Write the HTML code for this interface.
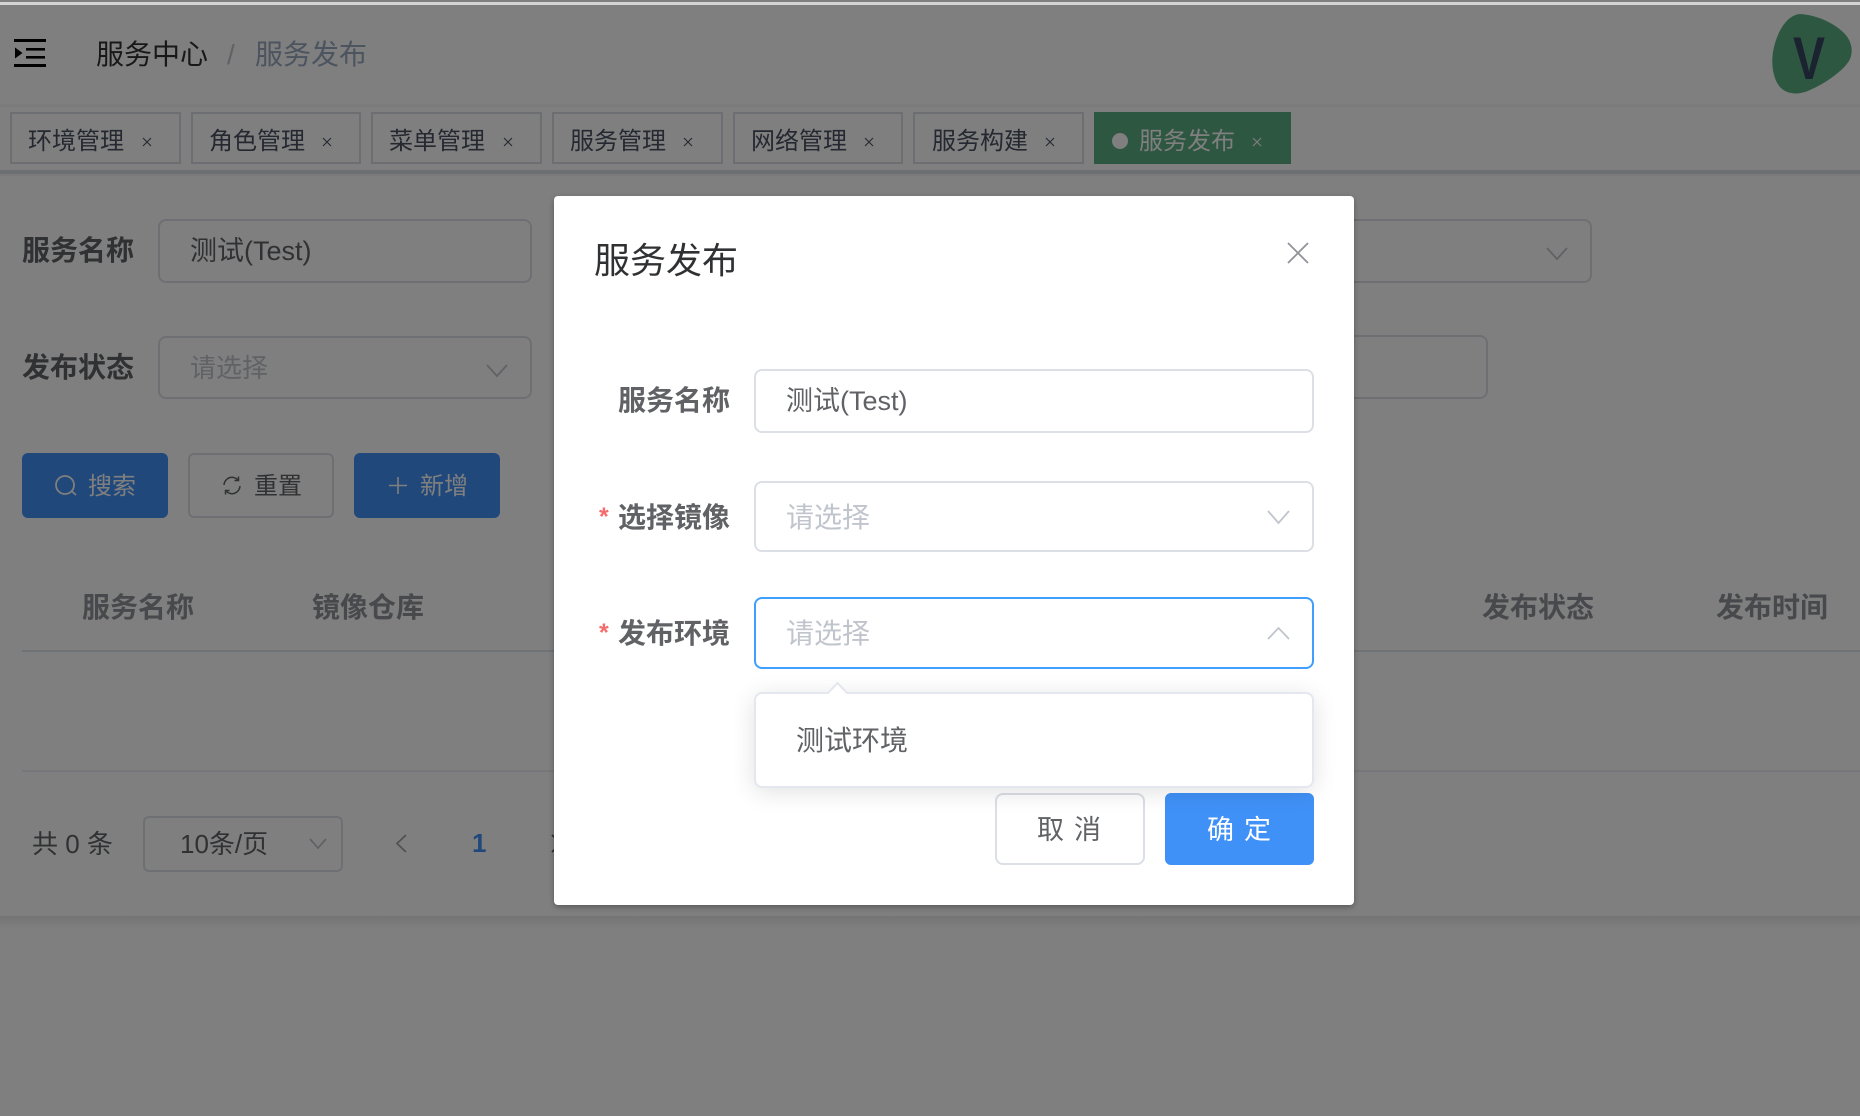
<!DOCTYPE html>
<html lang="zh-CN">
<head>
<meta charset="utf-8">
<title>服务发布</title>
<style>
*{box-sizing:border-box;margin:0;padding:0}
html,body{width:1860px;height:1116px;overflow:hidden;background:#fff;font-family:"Liberation Sans","Noto Sans CJK SC",sans-serif}
body{position:relative}
.t{position:absolute;white-space:nowrap;line-height:1}
.b{font-weight:700}
.box{position:absolute;border:2px solid #dcdfe6;border-radius:8px;background:#fff}
.tab{position:absolute;top:112px;height:52px;border:2px solid #d8dce5;background:#fff}
.btn{position:absolute;top:453px;height:65px;border-radius:6px;background:#4091f7}
svg{position:absolute;left:0;top:0}
</style>
</head>
<body>
<!-- page beneath overlay -->
<div style="position:absolute;left:0;top:104px;width:1860px;height:3px;background:#f6f6f6"></div>
<div style="position:absolute;left:0;top:107px;width:1860px;height:63px;background:#fff"></div>
<div style="position:absolute;left:0;top:170px;width:1860px;height:4px;background:#d8dce5"></div>
<div style="position:absolute;left:0;top:174px;width:1860px;height:2px;background:#f4f4f4"></div>
<div style="position:absolute;left:0;top:916px;width:1860px;height:12px;background:linear-gradient(#e9e9e9,#fefefe)"></div>

<div class="t" style="left:96px;top:41px;font-size:28px;color:#303133">服务中心</div>
<div class="t" style="left:227px;top:41px;font-size:28px;color:#c0c4cc">/</div>
<div class="t" style="left:255px;top:41px;font-size:28px;color:#97a8be">服务发布</div>

<div class="tab" style="left:10px;width:171px"></div>
<div class="t" style="left:28px;top:130px;font-size:24px;color:#495060">环境管理</div>
<div class="tab" style="left:191px;width:170px"></div>
<div class="t" style="left:209px;top:130px;font-size:24px;color:#495060">角色管理</div>
<div class="tab" style="left:371px;width:171px"></div>
<div class="t" style="left:389px;top:130px;font-size:24px;color:#495060">菜单管理</div>
<div class="tab" style="left:552px;width:171px"></div>
<div class="t" style="left:570px;top:130px;font-size:24px;color:#495060">服务管理</div>
<div class="tab" style="left:733px;width:170px"></div>
<div class="t" style="left:751px;top:130px;font-size:24px;color:#495060">网络管理</div>
<div class="tab" style="left:913px;width:171px"></div>
<div class="t" style="left:932px;top:130px;font-size:24px;color:#495060">服务构建</div>
<div style="position:absolute;left:1094px;top:112px;width:197px;height:52px;background:#5cae84"></div>
<div style="position:absolute;left:1112px;top:133px;width:16px;height:16px;border-radius:50%;background:#fff"></div>
<div class="t" style="left:1139px;top:130px;font-size:24px;color:#fff">服务发布</div>

<!-- filter form -->
<div class="t b" style="left:22px;top:237px;font-size:28px;color:#606266">服务名称</div>
<div class="box" style="left:158px;top:219px;width:374px;height:64px"></div>
<div class="t" style="left:190px;top:238px;font-size:27px;color:#606266">测试(Test)</div>
<div class="box" style="left:1300px;top:219px;width:292px;height:64px"></div>
<div class="box" style="left:1300px;top:335px;width:188px;height:64px"></div>
<div class="t b" style="left:22px;top:354px;font-size:28px;color:#606266">发布状态</div>
<div class="box" style="left:158px;top:336px;width:374px;height:63px"></div>
<div class="t" style="left:190px;top:355px;font-size:26px;color:#c0c4cc">请选择</div>

<div class="btn" style="left:22px;width:146px"></div>
<div class="t" style="left:88px;top:475px;font-size:24px;color:#fff">搜索</div>
<div class="box" style="left:188px;top:453px;width:146px;height:65px;border-radius:6px"></div>
<div class="t" style="left:254px;top:475px;font-size:24px;color:#606266">重置</div>
<div class="btn" style="left:354px;width:146px"></div>
<div class="t" style="left:420px;top:475px;font-size:24px;color:#fff">新增</div>

<!-- table -->
<div class="t b" style="left:82px;top:594px;font-size:28px;color:#909399">服务名称</div>
<div class="t b" style="left:312px;top:594px;font-size:28px;color:#909399">镜像仓库</div>
<div class="t b" style="left:1482px;top:594px;font-size:28px;color:#909399">发布状态</div>
<div class="t b" style="left:1716px;top:594px;font-size:28px;color:#909399">发布时间</div>
<div style="position:absolute;left:22px;top:650px;width:1838px;height:2px;background:#dfe6ec"></div>
<div style="position:absolute;left:22px;top:770px;width:1838px;height:2px;background:#ebeef5"></div>

<!-- pagination -->
<div class="t" style="left:32px;top:831px;font-size:26px;color:#606266">共 0 条</div>
<div class="box" style="left:143px;top:816px;width:200px;height:56px;border-radius:6px"></div>
<div class="t" style="left:180px;top:831px;font-size:26px;color:#606266">10条/页</div>
<div class="t b" style="left:472px;top:830px;font-size:26px;color:#4091f7">1</div>

<!-- icons beneath overlay -->
<svg width="1860" height="1116" viewBox="0 0 1860 1116">
  <g fill="#000">
    <rect x="14" y="39" width="32" height="3"/>
    <rect x="14" y="64" width="32" height="3"/>
    <rect x="26" y="48" width="19" height="2.6"/>
    <rect x="26" y="56" width="19" height="2.6"/>
    <path d="M15 47.500 L22.500 53 L15 58.500 Z"/>
  </g>
  <path fill="#5cae84" d="M1800 14 C1817 15 1834 23 1844 33 C1852 41 1854 52 1849 61 C1842 72 1824 84 1810 90 C1800 95 1787 95 1780 87 C1773 79 1771 64 1773 52 C1776 34 1786 15 1800 14 Z"/>
  <g fill="none" stroke="#495060" stroke-width="1.100">
    <path d="M143 138 L151 146 M151 138 L143 146"/>
    <path d="M323 138 L331 146 M331 138 L323 146"/>
    <path d="M504 138 L512 146 M512 138 L504 146"/>
    <path d="M684 138 L692 146 M692 138 L684 146"/>
    <path d="M865 138 L873 146 M873 138 L865 146"/>
    <path d="M1046 138 L1054 146 M1054 138 L1046 146"/>
    <path stroke="#fff" d="M1253 138 L1261 146 M1261 138 L1253 146"/>
  </g>
  <g fill="none" stroke="#c0c4cc" stroke-width="1.800">
    <path d="M1547 248 L1557 259 L1567 248"/>
    <path d="M487 365 L497 376 L507 365"/>
    <path d="M310 839 L318 848 L326 839"/>
    <path d="M406 835 L397 843.500 L406 852" stroke="#a0a4aa"/>
    <path d="M552 835 L561 843.500 L552 852" stroke="#606266"/>
  </g>
  <g fill="none" stroke="#fff" stroke-width="1.800">
    <circle cx="65" cy="485" r="9"/>
    <path d="M71.500 491 L76 495"/>
    <path d="M389 485.500 H407 M398 477 V494" stroke-width="1.600"/>
  </g>
  <g fill="none" stroke="#606266" stroke-width="1.500">
    <path d="M224 485 A8 8 0 0 1 238 480"/>
    <path d="M240 486 A8 8 0 0 1 226 491"/>
    <path d="M238.500 476.500 V480.500 H234.500"/>
    <path d="M225.500 494.500 V490.500 H229.500"/>
  </g>
</svg>
<div class="t b" style="left:1793px;top:29px;font-size:60px;color:#364663;transform:scaleX(.8);transform-origin:left top;">V</div>

<!-- overlay -->
<div style="position:absolute;left:0;top:0;width:1860px;height:1116px;background:rgba(0,0,0,.5)"></div>
<div style="position:absolute;left:0;top:2px;width:1860px;height:3px;background:#d4d4d4"></div>

<!-- modal -->
<div style="position:absolute;left:554px;top:196px;width:800px;height:709px;background:#fff;border-radius:4px;box-shadow:0 2px 6px rgba(0,0,0,.3)"></div>
<div class="t" style="left:594px;top:243px;font-size:36px;color:#303133">服务发布</div>

<div class="t b" style="left:618px;top:387px;font-size:28px;color:#606266">服务名称</div>
<div class="box" style="left:754px;top:369px;width:560px;height:64px"></div>
<div class="t" style="left:786px;top:388px;font-size:27px;color:#606266">测试(Test)</div>

<div class="t b" style="left:599px;top:505px;font-size:25px;color:#f56c6c">*</div>
<div class="t b" style="left:618px;top:504px;font-size:28px;color:#606266">选择镜像</div>
<div class="box" style="left:754px;top:481px;width:560px;height:71px"></div>
<div class="t" style="left:786px;top:504px;font-size:28px;color:#c0c4cc">请选择</div>

<div class="t b" style="left:599px;top:621px;font-size:25px;color:#f56c6c">*</div>
<div class="t b" style="left:618px;top:620px;font-size:28px;color:#606266">发布环境</div>
<div class="box" style="left:754px;top:597px;width:560px;height:72px;border-color:#409eff"></div>
<div class="t" style="left:786px;top:620px;font-size:28px;color:#c0c4cc">请选择</div>

<div class="box" style="left:995px;top:793px;width:150px;height:72px"></div>
<div class="t" style="left:1037px;top:817px;font-size:27px;color:#606266;letter-spacing:10px">取消</div>
<div style="position:absolute;left:1165px;top:793px;width:149px;height:72px;background:#4091f7;border-radius:6px"></div>
<div class="t" style="left:1207px;top:817px;font-size:27px;color:#fff;letter-spacing:10px">确定</div>

<div class="box" style="left:754px;top:692px;width:560px;height:96px;border-color:#e4e7ed;box-shadow:0 4px 24px rgba(0,0,0,.12)"></div>
<div class="t" style="left:796px;top:727px;font-size:28px;color:#606266">测试环境</div>

<svg width="1860" height="1116" viewBox="0 0 1860 1116">
  <path d="M1288 243 L1308 263 M1308 243 L1288 263" fill="none" stroke="#909399" stroke-width="1.800"/>
  <path d="M1268 511 L1278.500 523 L1289 511" fill="none" stroke="#c0c4cc" stroke-width="1.800"/>
  <path d="M1268 639 L1278.500 628 L1289 639" fill="none" stroke="#c0c4cc" stroke-width="1.800"/>
  <path d="M828 694 L837.500 683 L847 694 Z" fill="#fff"/>
  <path d="M828 693 L837.500 683 L847 693" fill="none" stroke="#e4e7ed" stroke-width="2"/>
</svg>
</body>
</html>
